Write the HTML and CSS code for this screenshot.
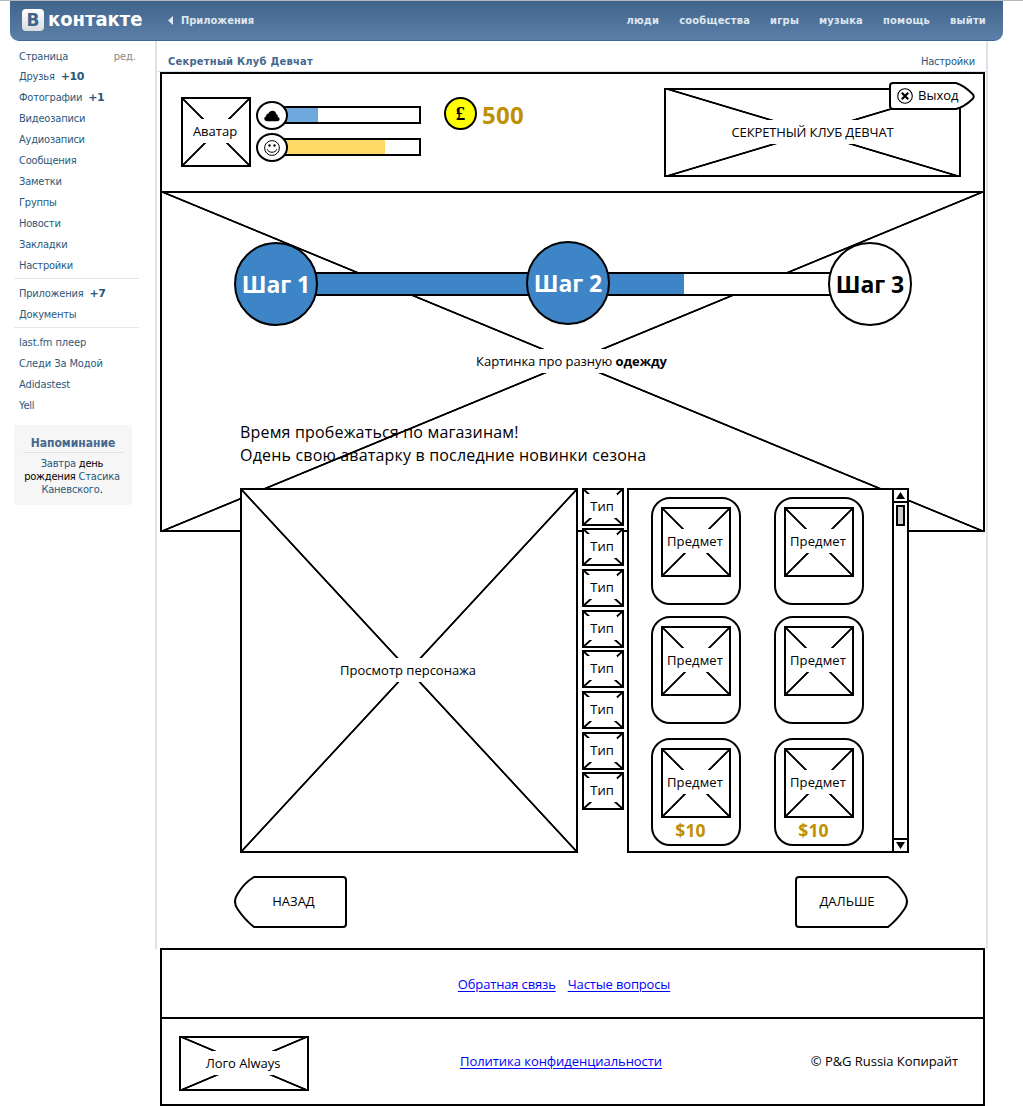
FILE: index.html
```html
<!DOCTYPE html>
<html lang="ru">
<head>
<meta charset="utf-8">
<title>Секретный Клуб Девчат</title>
<link rel="stylesheet" href="styles.css">
</head>
<body>
<header class="header">
  <div class="logo"><span class="logo-mark">В</span><span class="logo-text">контакте</span></div>
  <a class="back"><svg width="5" height="9" viewBox="0 0 5 9"><path d="M5 0v9L0 4.5z" fill="#dfe7f0"/></svg>Приложения</a>
  <nav class="topnav"><a>люди</a><a>сообщества</a><a>игры</a><a>музыка</a><a>помощь</a><a>выйти</a></nav>
</header>

<div class="columns">
  <aside class="sidebar">
    <ul class="menu">
      <li class="first"><a>Страница</a><span class="edit">ред.</span></li>
      <li><a>Друзья</a><b>+10</b></li>
      <li><a>Фотографии</a><b>+1</b></li>
      <li><a>Видеозаписи</a></li>
      <li><a>Аудиозаписи</a></li>
      <li><a>Сообщения</a></li>
      <li><a>Заметки</a></li>
      <li><a>Группы</a></li>
      <li><a>Новости</a></li>
      <li><a>Закладки</a></li>
      <li><a>Настройки</a></li>
    </ul>
    <ul class="menu">
      <li><a>Приложения</a><b>+7</b></li>
      <li><a>Документы</a></li>
    </ul>
    <ul class="menu">
      <li><a class="loose">last.fm плеер</a></li>
      <li><a class="loose">Следи За Модой</a></li>
      <li><a class="loose">Adidastest</a></li>
      <li><a>Yell</a></li>
    </ul>
    <section class="reminder">
      <h2>Напоминание</h2>
      <p><a>Завтра</a> день<br>рождения <a>Стасика</a><br><a>Каневского</a>.</p>
    </section>
  </aside>

  <main class="main">
    <div class="titlebar"><h1>Секретный Клуб Девчат</h1><a>Настройки</a></div>

    <section class="panel profile">
      <div class="ph avatar"><span>Аватар</span></div>
      <div class="meters">
        <div class="meter">
          <span class="badge"><svg width="16" height="12" viewBox="0 0 16 12"><path d="M3.2 11.2C1 11.2.2 9.9.3 8.600C.4 7.200 1.300 6.500 2.200 6.300C2 4.600 3 3.500 4.500 3.500C5.200 1.500 6.700.6 8.500.7C10.800.8 12.100 2.200 12.200 4.100C13.500 4.500 13.900 5.500 13.700 6.700C15 7.200 15.700 8.100 15.600 9.300C15.500 10.500 14.700 11.200 13.300 11.200z"/></svg></span>
          <span class="bar"><i class="sky" style="width:32px"></i></span>
        </div>
        <div class="meter">
          <span class="badge"><svg width="16" height="16" viewBox="0 0 16 16" fill="none" stroke="#000"><circle cx="8" cy="8" r="7.400"/><path d="M3.200 9.200C4.500 13.300 11.500 13.300 12.800 9.200"/><circle cx="5.500" cy="5.500" r="1.200" fill="#000" stroke="none"/><circle cx="10.500" cy="5.500" r="1.200" fill="#000" stroke="none"/></svg></span>
          <span class="bar"><i class="sun" style="width:99px"></i></span>
        </div>
      </div>
      <div class="money"><span class="coin">£</span><b>500</b></div>
      <div class="brand">
        <div class="ph brand-pic"><span>СЕКРЕТНЫЙ КЛУБ ДЕВЧАТ</span></div>
        <a class="exit">
          <svg class="shape" width="86" height="28" viewBox="0 0 86 28"><path d="M4 1H67Q75 3.500 83 11.500Q86.500 14.500 83 17.500Q75 25 67 27H4Q1 27 1 24V4Q1 1 4 1z"/></svg>
          <svg class="cross" width="16" height="16" viewBox="0 0 16 16"><circle cx="8" cy="8" r="7.300" fill="none" stroke="#000" stroke-width="1.100"/><path d="M4.800 4.800l6.400 6.400M11.200 4.800l-6.400 6.400" stroke="#000" stroke-width="2.200"/></svg>
          <span>Выход</span>
        </a>
      </div>
    </section>

    <section class="stage">
      <div class="ph hero"><span>Картинка про разную <b>одежду</b></span></div>
      <div class="content">
        <div class="steps">
          <div class="step done">Шаг 1</div>
          <div class="track"><i style="width:100%"></i></div>
          <div class="step done middle">Шаг 2</div>
          <div class="track long"><i style="width:76px"></i></div>
          <div class="step">Шаг 3</div>
        </div>
        <p class="intro">Время пробежаться по магазинам!<br>Одень свою аватарку в последние новинки сезона</p>
        <div class="workspace">
          <div class="ph preview"><span>Просмотр персонажа</span></div>
          <div class="types">
            <div class="ph type"><span>Тип</span></div>
            <div class="ph type"><span>Тип</span></div>
            <div class="ph type"><span>Тип</span></div>
            <div class="ph type"><span>Тип</span></div>
            <div class="ph type"><span>Тип</span></div>
            <div class="ph type"><span>Тип</span></div>
            <div class="ph type"><span>Тип</span></div>
            <div class="ph type"><span>Тип</span></div>
          </div>
          <div class="shop">
            <div class="items">
              <div class="card"><div class="ph item"><span>Предмет</span></div></div>
              <div class="card"><div class="ph item"><span>Предмет</span></div></div>
              <div class="card"><div class="ph item"><span>Предмет</span></div></div>
              <div class="card"><div class="ph item"><span>Предмет</span></div></div>
              <div class="card"><div class="ph item"><span>Предмет</span></div><b>$10</b></div>
              <div class="card"><div class="ph item"><span>Предмет</span></div><b>$10</b></div>
            </div>
            <div class="scroll">
              <span class="arrow up"><svg width="9" height="7" viewBox="0 0 9 7"><path d="M4.500 0L9 7H0z"/></svg></span>
              <span class="thumb"></span>
              <span class="arrow down"><svg width="9" height="7" viewBox="0 0 9 7"><path d="M4.500 7L9 0H0z"/></svg></span>
            </div>
          </div>
        </div>
        <div class="buttons">
          <a class="step-btn prev"><svg class="shape" width="113" height="52" viewBox="0 0 113 52"><path d="M109 1H20Q10 7 3.500 18Q-1.500 25.500 3.500 33Q11 44 20 51H109Q112 51 112 48V4Q112 1 109 1z"/></svg><span>НАЗАД</span></a>
          <a class="step-btn next"><svg class="shape" width="113" height="52" viewBox="0 0 113 52"><path d="M4 1H93Q103 7 109.500 18Q114.500 25.500 109.500 33Q102 44 93 51H4Q1 51 1 48V4Q1 1 4 1z"/></svg><span>ДАЛЬШЕ</span></a>
        </div>
      </div>
    </section>
  </main>
</div>

<footer class="footer">
  <div class="panel links"><a class="link">Обратная связь</a><a class="link">Частые вопросы</a></div>
  <div class="panel legal">
    <div class="ph always"><span>Лого Always</span></div>
    <a class="link">Политика конфиденциальности</a>
    <span class="copy">© P&amp;G Russia Копирайт</span>
  </div>
</footer>
</body>
</html>
```
FILE: styles.css
```css
* { box-sizing: border-box; }
body {
  margin: 0;
  border-top: 1px solid #b4b9be;
  background: #fff;
  color: #000;
  font: 11px/13px "DejaVu Sans Condensed", "DejaVu Sans", sans-serif;
}
a { color: #2b587a; text-decoration: none; }
ul, p, h1, h2 { margin: 0; padding: 0; list-style: none; }
svg { display: block; }

/* header */
.header {
  display: flex;
  align-items: center;
  width: 993px;
  height: 40px;
  margin-left: 10px;
  padding: 0 17px 1px 12px;
  background: linear-gradient(#41648b, #5b7fa8);
  border-bottom: 1px solid #3f6795;
  border-radius: 0 0 9px 9px;
}
.header a { color: #dfe7f0; font-weight: bold; }
.logo { display: flex; align-items: center; gap: 4px; width: 146px; }
.logo-mark {
  width: 22px;
  height: 22px;
  border-radius: 4px;
  background: linear-gradient(#fff, #d9dcdf);
  color: #41648b;
  font: bold 17px/22px "DejaVu Sans", sans-serif;
  text-align: center;
}
.logo-text { margin-top: -2px; color: #fff; font: bold 20px/24px "DejaVu Sans Condensed", sans-serif; }
.back { display: flex; align-items: center; gap: 8px; }
.topnav { display: flex; gap: 20px; margin-left: auto; letter-spacing: .22px; }

/* left column */
.columns { display: flex; height: 908px; }
.sidebar { width: 155px; padding: 5px 16px 0 14px; letter-spacing: -.2px; }
.menu { padding: 0 3px 2px 5px; }
.menu + .menu { padding-top: 4px; border-top: 1px solid #e4e6e8; }
.menu li { display: flex; align-items: center; gap: 6px; height: 21px; }
.menu .first { height: 20px; justify-content: space-between; }
.menu b { color: #2b587a; font-family: "DejaVu Sans", sans-serif; letter-spacing: -.4px; }
.menu .edit { color: #888; letter-spacing: 0; }
.menu .loose { letter-spacing: -.1px; }
.reminder { width: 118px; height: 80px; margin-top: 7px; padding: 10px 8px 0 10px; background: #f6f6f6; text-align: center; }
.reminder h2 {
  height: 18px;
  margin: 0 1px 4px -1px;
  border-bottom: 1px solid #dae1e8;
  color: #45688e;
  font: bold 12px/16px "DejaVu Sans Condensed", sans-serif;
  letter-spacing: 0;
}
.reminder p { margin: 0 -4px 0 -8px; }

/* application area */
.main { width: 833px; border: solid #dde3ea; border-width: 0 2px; }
.titlebar {
  display: flex;
  justify-content: space-between;
  align-items: center;
  height: 31px;
  padding: 10px 11px 0 11px;
  border-bottom: 1px solid #dae1e8;
  letter-spacing: -.2px;
}
.titlebar h1 { color: #45688e; font-size: 11px; letter-spacing: .26px; }
.panel { width: 825px; border: 2px solid #000; background: #fff; }
.main .panel, .stage { margin-left: 3px; }
.panel, .stage { font: 13px/24px "Open Sans", sans-serif; }

/* crossed placeholder boxes */
.ph {
  display: flex;
  align-items: center;
  justify-content: center;
  border: 2px solid #000;
  background:
    linear-gradient(to top right, transparent calc(50% - 1.300px), #000 calc(50% - .6px), #000 calc(50% + .6px), transparent calc(50% + 1.300px)),
    linear-gradient(to bottom right, transparent calc(50% - 1.300px), #000 calc(50% - .6px), #000 calc(50% + .6px), transparent calc(50% + 1.300px)),
    #fff;
  background-origin: border-box;
}
.ph span { height: 24px; margin: 0 2px 2px 0; background: #fff; white-space: nowrap; }

.profile { display: flex; height: 121px; padding-left: 19px; }
.avatar { width: 70px; height: 70px; margin-top: 23px; }
.meters { display: flex; flex-direction: column; gap: 3px; margin: 27px 0 0 5px; }
.meter { display: flex; align-items: flex-start; height: 29px; }
.badge {
  z-index: 1;
  display: flex;
  align-items: center;
  justify-content: center;
  width: 32px;
  height: 29px;
  border: 2px solid #000;
  border-radius: 50%;
  background: #fff;
}
.bar { width: 137px; height: 18px; margin: 5px 0 0 -4px; border: 2px solid #000; background: #fff; }
.bar i { display: block; height: 100%; }
.sky { background: #6fa8dc; }
.sun { background: #ffd966; }
.money { display: flex; align-items: center; gap: 5px; height: 33px; margin: 23px 0 0 23px; }
.money b { color: #bf9000; font-size: 24px; letter-spacing: .28px; padding-top: 2px; }
.coin {
  width: 33px;
  height: 33px;
  border: 2px solid #000;
  border-radius: 50%;
  background: #ff0;
  font: bold 19px/29px "Liberation Serif", serif;
  text-align: center;
}
.brand { position: relative; margin: 14px 22px 0 auto; }
.brand-pic { width: 297px; height: 89px; letter-spacing: -.13px; }
.brand-pic span { margin-right: 0; }
.exit {
  position: absolute;
  top: -6px;
  left: 225px;
  display: flex;
  align-items: center;
  gap: 5px;
  width: 86px;
  height: 28px;
  padding-left: 8px;
  color: #000;
}
.shape { position: absolute; inset: 0; fill: #fff; stroke: #000; stroke-width: 2; }
.exit .cross, .exit span { position: relative; }
.exit .cross { margin-bottom: 1px; }
.exit span { margin-bottom: 2px; }

/* wardrobe scene */
.stage { position: relative; width: 825px; margin-top: -2px; }
.hero { position: absolute; top: 0; left: 0; width: 825px; height: 341px; letter-spacing: -.06px; }
.content { position: relative; padding: 50px 73px 0 74px; }
.steps { display: flex; align-items: flex-start; height: 85px; }
.step {
  z-index: 1;
  flex: none;
  width: 84px;
  height: 84px;
  margin-top: 1px;
  border: 2px solid #000;
  border-radius: 50%;
  background: #fff;
  font-size: 23px;
  font-weight: bold;
  line-height: 80px;
  text-align: center;
  white-space: nowrap;
  letter-spacing: -.1px;
}
.step.middle { margin-top: 0; }
.step.done { background: #3d85c6; color: #fff; }
.track { width: 212px; height: 24px; margin: 31px -2px 0; border: solid #000; border-width: 2px 0; background: #fff; }
.track.long { width: 222px; }
.track i { display: block; height: 100%; background: #3d85c6; }
.intro { margin: 95px 0 21px 6px; font-size: 16px; line-height: 23px; letter-spacing: .18px; }
.workspace { display: flex; height: 365px; margin-left: 6px; }
.preview { width: 338px; }
.types { display: flex; flex-direction: column; justify-content: space-between; width: 42px; height: 322.900px; margin: -.35px 3px 0 4px; }
.type { height: 38px; }
.type span { padding: 0 3px; }
.shop { display: flex; width: 282px; border: 2px solid #000; background: #fff; }
.items {
  display: grid;
  grid-template-columns: 90px 90px;
  grid-template-rows: 119px 122px 108px;
  column-gap: 33px;
  width: 263px;
  padding: 7px 0 0 22px;
}
.card { height: 108px; padding: 8px; border: 2px solid #000; border-radius: 19px; background: #fff; }
.item { height: 70px; letter-spacing: .12px; }
.card b { display: block; padding-right: 11px; color: #bf9000; font-size: 17.500px; text-align: center; letter-spacing: .2px; }
.scroll { display: flex; flex-direction: column; width: 15px; border-left: 2px solid #000; }
.arrow { display: flex; align-items: center; justify-content: center; height: 13px; }
.up { border-bottom: 2px solid #000; }
.down { margin-top: auto; border-top: 2px solid #000; }
.thumb { width: 9px; height: 21px; margin: 2px; border: 2px solid #000; background: #ccc; }
.buttons { display: flex; justify-content: space-between; margin-top: 23px; padding-right: 4px; }
.step-btn {
  position: relative;
  display: flex;
  align-items: center;
  justify-content: center;
  width: 113px;
  height: 52px;
  padding-bottom: 2px;
  color: #000;
}
.step-btn span { position: relative; }
.prev { padding-left: 6px; }
.next { padding-right: 9px; }

/* footer */
.footer { margin: -1px 0 0 160px; }
.links { display: flex; align-items: center; justify-content: center; gap: 12px; height: 71px; padding-right: 17px; letter-spacing: -.15px; }
.legal { display: flex; align-items: flex-start; height: 89px; margin-top: -2px; padding: 17px 0 0 17px; letter-spacing: -.05px; }
.always { width: 130px; height: 55px; margin-right: 151px; }
.link { color: #00f; text-decoration: underline; text-underline-offset: 2px; }
.legal .link { margin-top: 13px; }
.copy { margin: 13px 25px 0 auto; }
```
